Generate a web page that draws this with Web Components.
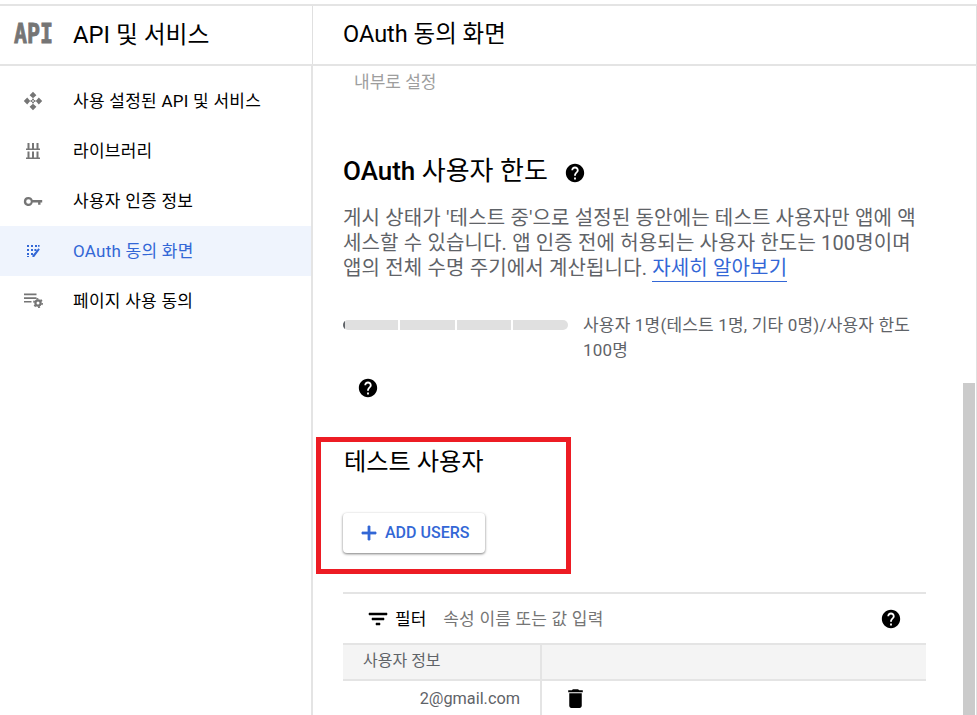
<!DOCTYPE html>
<html lang="ko"><head><meta charset="utf-8"><title>OAuth 동의 화면</title>
<style>
html,body{margin:0;padding:0;background:#fff;height:100%;overflow:hidden}
body{font-family:Roboto,"Noto Sans CJK KR",sans-serif;color:#000}
</style></head><body>
<console-app>
  <side-nav slot="side">
    <nav-item label="사용 설정된 API 및 서비스" icon="apis"></nav-item>
    <nav-item label="라이브러리" icon="library"></nav-item>
    <nav-item label="사용자 인증 정보" icon="key"></nav-item>
    <nav-item label="OAuth 동의 화면" icon="consent" active></nav-item>
    <nav-item label="페이지 사용 동의" icon="agree"></nav-item>
  </side-nav>
  <quota-section slot="main"></quota-section>
  <test-users slot="main"></test-users>
</console-app>
<script>
const ICONS={
 apis:'<path d="M10 .8l3.4 3.4L10 7.2 6.6 4.2zM10 12.8l3.4 3L10 19.2l-3.4-3.4zM4.2 6.6l3 3.4-3 3.4L.8 10zM15.8 6.6l3.4 3.4-3.4 3.4-3-3.4z"/><circle cx="10" cy="8.4" r="1"/><circle cx="10" cy="11.6" r="1"/><circle cx="8.4" cy="10" r="1"/><circle cx="11.6" cy="10" r="1"/>',
 library:'<path d="M4.5 2h2v5.5h-2zM9 2h2v5.5H9zM13.5 2h2v5.5h-2zM3 7.5h14V9H3zM4.5 10.5h2v6h-2zM9 10.5h2v6H9zM13.5 10.5h2v6h-2zM3 16.5h14V18H3z"/>',
 key:'<path fill-rule="evenodd" d="M5.5 6a4.5 4.5 0 0 1 4.2 3h9.5v2.6h-1.7v2.2h-2.4v-2.2h-5.4A4.5 4.5 0 1 1 5.5 6zm0 2.2a2.3 2.3 0 1 0 0 4.6 2.3 2.3 0 0 0 0-4.6z"/>',
 consent:'<path d="M4 4h2v2H4zM8 4h2v2H8zM12 4h2v2h-2zM15 4h1.6v1.8H15zM4 8h2v2H4zM8 8h2v2H8zM11.4 8h2v2h-2zM4 12h2v2H4zM8 12h2v2H8zM4 15h2v1H4zM15.4 7.2l1.4 1.2-5.6 7.6H9.4v-1.6z"/>',
 agree:'<path d="M1 2.5h12.5v1.7H1zM1 6.2h12.5v1.7H1zM1 9.9h7.5v1.7H1z"/><circle cx="15" cy="12" r="2.6" fill="none" stroke="currentColor" stroke-width="2.2"/><circle cx="15" cy="12" r="4.2" fill="none" stroke="currentColor" stroke-width="1.5" stroke-dasharray="2 2.4"/>'
};
const HELP='M12 2C6.48 2 2 6.48 2 12s4.48 10 10 10 10-4.48 10-10S17.52 2 12 2zm1 17h-2v-2h2v2zm2.07-7.75l-.9.92C13.45 12.9 13 13.5 13 15h-2v-.5c0-1.1.45-2.1 1.17-2.83l1.24-1.26c.37-.36.59-.86.59-1.41 0-1.1-.9-2-2-2s-2 .9-2 2H8c0-2.21 1.79-4 4-4s4 1.79 4 4c0 .88-.36 1.68-.93 2.25z';
function shadow(el,html){el.attachShadow({mode:'open'}).innerHTML=html}

customElements.define('help-icon',class extends HTMLElement{constructor(){super();shadow(this,`<style>:host{display:inline-flex;width:22px;height:22px;color:#000}svg{width:22px;height:22px;fill:currentColor;display:block}</style><svg viewBox="0 0 24 24"><path d="${HELP}"/></svg>`)}});

customElements.define('nav-item',class extends HTMLElement{constructor(){super();
 const a=this.hasAttribute('active');
 const col=a?'#3367d6':'#757575';
 shadow(this,`<style>
 :host{display:flex;align-items:center;height:50px;background:${a?'#eff4fd':'transparent'};color:${a?'#3367d6':'#000'};font-size:17px;letter-spacing:.25px}
 svg{width:20px;height:20px;margin-left:23px;fill:${col};color:${col};flex:none}
 span{margin-left:30px;margin-bottom:4px;white-space:nowrap}
 </style><svg viewBox="0 0 20 20">${ICONS[this.getAttribute('icon')]}</svg><span>${this.getAttribute('label')}</span>`)}});

customElements.define('side-nav',class extends HTMLElement{constructor(){super();shadow(this,`<style>
 :host{display:block;padding-top:10px}
 </style><slot></slot>`)}});

customElements.define('console-app',class extends HTMLElement{constructor(){super();shadow(this,`<style>
 :host{display:grid;grid-template-columns:312px 1fr;grid-template-rows:60px 1fr;height:711px;margin-top:4px;box-sizing:border-box;border-top:2px solid #e4e4e4;position:relative;overflow:hidden}
 header{display:flex;align-items:center;border-bottom:2px solid #e4e4e4;box-sizing:border-box;padding-bottom:6px}
 .h1{border-right:1px solid #e0e0e0;width:313px;box-sizing:border-box}
 .logo{font:700 21.6px "DejaVu Sans Mono",monospace;-webkit-text-stroke:.7px #757575;color:#757575;margin:3px 0 0 14px;width:59px;display:inline-block;transform:scaleY(1.22);transform-origin:center}
 .t{font-size:23.8px;white-space:nowrap}
 .h2 .t{margin-left:31px;font-size:23.5px}
 .h2{border-right:1px solid #e0e0e0}
 aside{border-right:2px solid #e4e4e4;width:313px;box-sizing:border-box;overflow:hidden}
 main{padding:0 0 0 31px;overflow:hidden;position:relative;border-right:1px solid #e0e0e0}
 .inner{font-size:17px;color:#9e9e9e;padding:4px 0 0 11px;line-height:25px;margin-bottom:-1px}
 .mark{position:absolute;left:316px;top:431px;width:255px;height:137px;border:5px solid #ed1c24;box-sizing:border-box;pointer-events:none}
 .thumb{position:absolute;right:2px;top:377px;bottom:0;width:12px;background:#cbcbcb}
 </style>
 <header class="h1"><span class="logo">API</span><span class="t">API 및 서비스</span></header>
 <header class="h2"><span class="t">OAuth 동의 화면</span></header>
 <aside><slot name="side"></slot></aside>
 <main><div class="inner">내부로 설정</div><slot name="main"></slot></main>
 <div class="thumb"></div><div class="mark"></div>`)}});

customElements.define('usage-bar',class extends HTMLElement{constructor(){super();shadow(this,`<style>
 :host{display:flex;gap:2px;width:225px;height:10px;border-radius:5px;overflow:hidden;position:relative;flex:none;margin-top:7px}
 i{flex:1;background:#e0e0e0}
 b{position:absolute;left:0;top:0;bottom:0;width:2px;background:#5f6368}
 </style><i></i><i></i><i></i><i></i><b></b>`)}});

customElements.define('quota-section',class extends HTMLElement{constructor(){super();shadow(this,`<style>
 :host{display:block}
 h2{margin:0;padding-top:59px;font-weight:400;font-size:26px;line-height:36px;display:flex;align-items:center;white-space:nowrap}
 h2 help-icon{margin-left:16px;margin-top:3px}
 h2 b{font-weight:500}
 p{margin:17px 0 0;width:585px;font-size:20px;letter-spacing:.15px;line-height:25px;height:75px;color:#5f6368;word-break:break-all}
 a{display:inline-block;line-height:25px;color:#3367d6;text-decoration:none;border-bottom:1px solid #3367d6}
 .usage{display:flex;gap:15px;margin-top:32px}
 .usage div{font-size:17px;letter-spacing:.18px;line-height:25px;color:#5f6368;width:335px}
 .h{margin:14px 0 0 14px;display:block}
 </style>
 <h2><b>OAuth</b>&nbsp;사용자 한도<help-icon></help-icon></h2>
 <p>게시 상태가 '테스트 중'으로 설정된 동안에는 테스트 사용자만 앱에 액세스할 수 있습니다. 앱 인증 전에 허용되는 사용자 한도는 100명이며 앱의 전체 수명 주기에서 계산됩니다. <a href="#">자세히 알아보기</a></p>
 <div class="usage"><usage-bar></usage-bar><div>사용자 1명(테스트 1명, 기타 0명)/사용자 한도 100명</div></div>
 <help-icon class="h"></help-icon>`)}});

customElements.define('add-button',class extends HTMLElement{constructor(){super();shadow(this,`<style>
 :host{display:inline-flex;align-items:center;height:40px;width:142px;box-sizing:border-box;padding-left:14px;background:#fff;border-radius:4px;box-shadow:0 1px 3px rgba(0,0,0,.4),0 1px 2px rgba(0,0,0,.15);color:#3367d6;font:500 16px Roboto,sans-serif;white-space:nowrap}
 svg{width:24px;height:24px;fill:#3367d6;stroke:#3367d6;stroke-width:.8;margin-right:4px;flex:none}
 span{margin-bottom:2px}
 </style><svg viewBox="0 0 24 24"><path d="M19 13h-6v6h-2v-6H5v-2h6V5h2v6h6v2z"/></svg><span><slot></slot></span>`)}});

customElements.define('test-users',class extends HTMLElement{constructor(){super();shadow(this,`<style>
 :host{display:block}
 h3{margin:0;padding:45px 0 0 1px;font-weight:400;font-size:24.2px;line-height:36px}
 add-button{margin-top:33px}
 user-table{margin-top:39px}
 </style><h3>테스트 사용자</h3><add-button>ADD USERS</add-button><user-table></user-table>`)}});

customElements.define('user-table',class extends HTMLElement{constructor(){super();shadow(this,`<style>
 :host{display:block;width:583px;border-top:2px solid #e4e4e4;font-size:17px}
 .filter{display:flex;align-items:center;height:49px;color:#000}
 .filter svg{width:24px;height:24px;margin-left:23px;flex:none;stroke:#000;stroke-width:.5}
 .filter .l{margin-left:5px;margin-bottom:2px}
 .filter .p{margin-left:17px;margin-bottom:2px;color:#757575;flex:1;letter-spacing:.2px}
 .filter help-icon{margin-right:24px}
 .row{display:grid;grid-template-columns:197px 1fr;border-top:2px solid #e4e4e4}
 .row>div+div{border-left:2px solid #e4e4e4}
 .head{background:#f4f4f4;height:34px;line-height:32px;color:#5f6368;font-size:16px}
 .head div:first-child{padding-left:20px}
 .body{height:60px;line-height:36px;color:#5f6368}
 .body .e{text-align:right;padding-right:20px;font-size:16.3px}
 .body svg{width:25px;height:25px;margin:5px 0 0 21px;display:block}
 </style>
 <div class="filter"><svg viewBox="0 0 24 24"><path d="M10 18h4v-2h-4v2zM3 6v2h18V6H3zm3 7h12v-2H6v2z"/></svg><span class="l">필터</span><span class="p">속성 이름 또는 값 입력</span><help-icon></help-icon></div>
 <div class="row head"><div>사용자 정보</div><div></div></div>
 <div class="row body"><div class="e">2@gmail.com</div><div><svg viewBox="0 0 24 24"><path d="M6 19c0 1.1.9 2 2 2h8c1.1 0 2-.9 2-2V7H6v12zM19 4h-3.5l-1-1h-5l-1 1H5v2h14V4z"/></svg></div></div>`)}});
</script>
</body></html>
